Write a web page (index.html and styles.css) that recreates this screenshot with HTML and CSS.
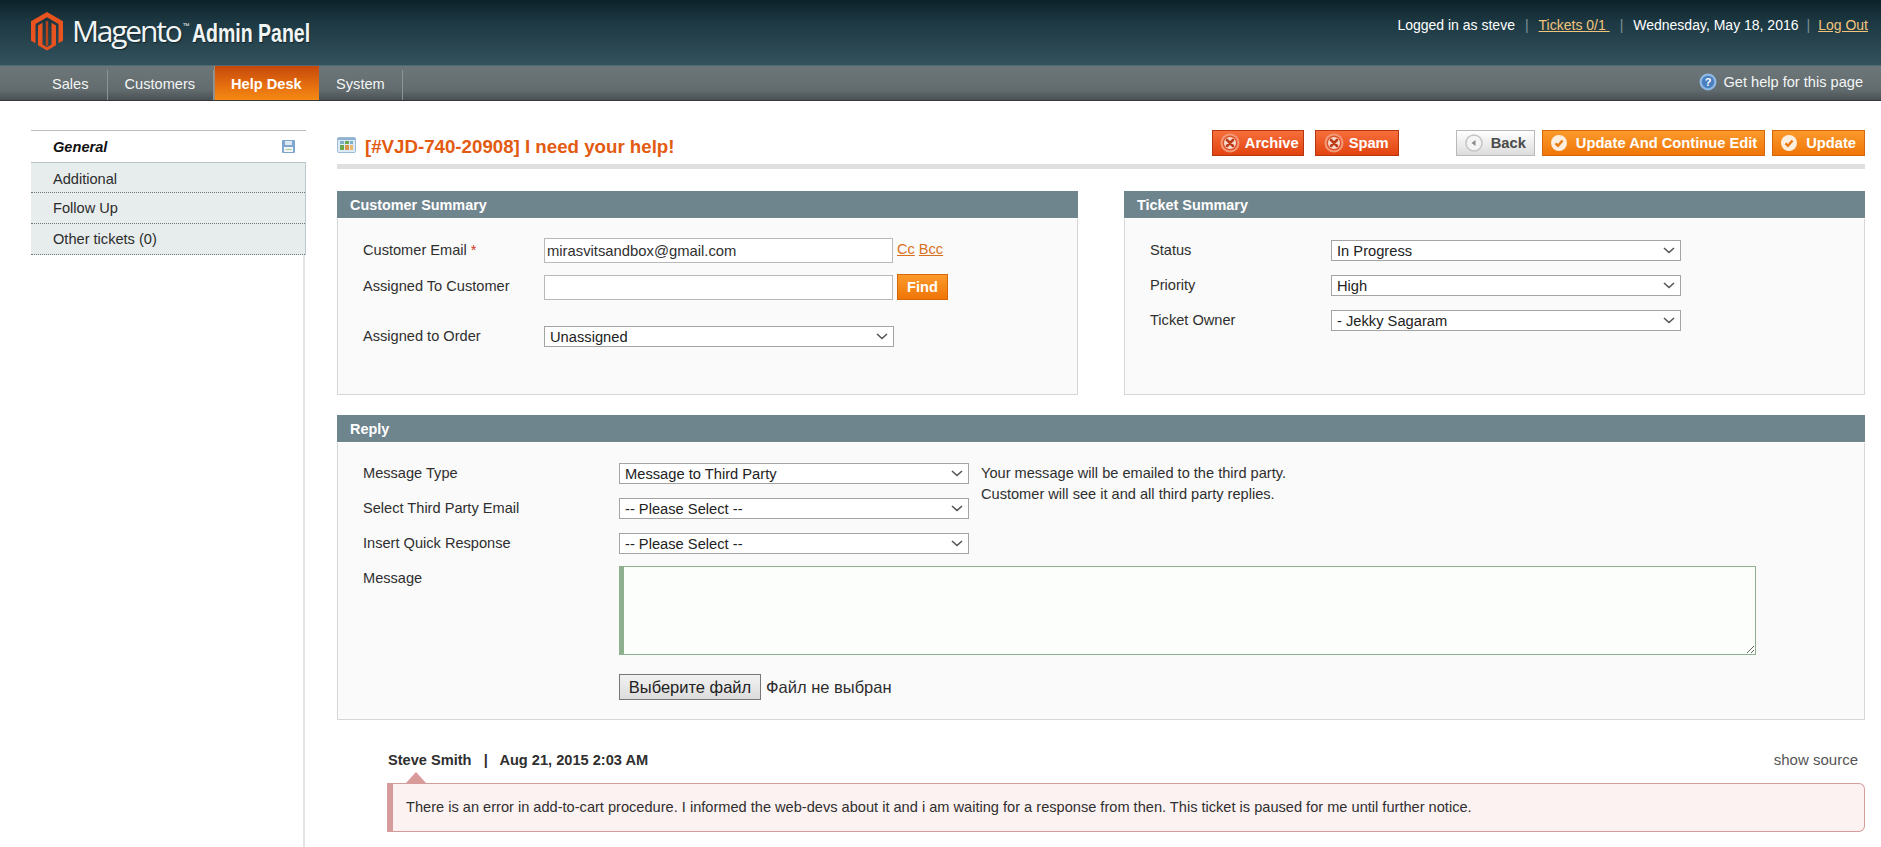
FILE: index.html
```html
<!DOCTYPE html>
<html lang="en">
<head>
<meta charset="utf-8">
<title>Magento Admin Panel</title>
<link rel="stylesheet" href="styles.css">
</head>
<body>
<svg class="defs" width="0" height="0">
  <symbol id="i-x" viewBox="0 0 20 20"><circle cx="10" cy="10" r="9.500" fill="#f29a78"/><circle cx="10" cy="10" r="7.500" fill="#e0532a"/><circle cx="10" cy="10" r="6" fill="#f7d9cd"/><path d="M7 7 13 13M13 7 7 13" stroke="#bb3b17" stroke-width="2.600" stroke-linecap="round"/></symbol>
  <symbol id="i-ok" viewBox="0 0 18 18"><circle cx="9" cy="9" r="8" fill="#fdeedd"/><path d="M5.500 9.300 8 11.800 12.500 6.500" fill="none" stroke="#e8790d" stroke-width="2.400"/></symbol>
  <symbol id="i-back" viewBox="0 0 18 18"><circle cx="9" cy="9" r="8" fill="#f4f4f4" stroke="#c4c4c4" stroke-width="1.500"/><path d="M10.500 6 6.500 9 10.500 12Z" fill="#8a8a8a"/></symbol>
</svg>
<header class="top">
  <div class="brand">
    <svg class="logo" width="32" height="39" viewBox="0 0 32 39"><path fill="#e8531f" d="M16 0 32 9.300V28.700L27.500 31.300V11.900L16 5.200 4.500 11.900V31.300L0 28.700V9.300Z"/><path fill="#e8531f" d="M7 13.400 11.500 10.800V32.600L16 35.200 20.500 32.600V10.800L25 13.400V33.200L16 38.600 7 33.200Z"/><path fill="#b8431a" d="M14.800 9.500 16 8.800 17.200 9.500V33.500L16 34.200 14.800 33.500Z"/></svg>
    <span class="wordmark">Magento</span><span class="tm">™</span>
    <span class="panelname">Admin Panel</span>
  </div>
  <div class="session">
    <span>Logged in as steve</span><span class="sep">|</span>
    <a href="#">Tickets 0/1&nbsp;</a><span class="sep">|</span>
    <span>Wednesday, May 18, 2016</span><span class="sep narrow">|</span>
    <a href="#">Log Out</a>
  </div>
</header>
<nav class="nav">
  <ul class="menu">
    <li class="item">Sales</li>
    <li class="item">Customers</li>
    <li class="item active">Help Desk</li>
    <li class="item">System</li>
  </ul>
  <div class="help">
    <svg width="18" height="18" viewBox="0 0 18 18"><circle cx="9" cy="9" r="8.500" fill="#8fb8e4"/><circle cx="9" cy="9" r="6.200" fill="#4a7fc0"/><text x="9" y="13" text-anchor="middle" class="helpq">?</text></svg>
    <span>Get help for this page</span>
  </div>
</nav>
<div class="page">
  <aside class="side">
    <div class="tab-current"><span>General</span>
      <svg width="13" height="13" viewBox="0 0 13 13"><rect width="13" height="13" rx="1" fill="#7fa6cf"/><rect x="3" y="1" width="7" height="4" fill="#dce8f4"/><rect x="2" y="7" width="9" height="5" fill="#f2f6fa"/><rect x="3.500" y="9" width="6" height="1" fill="#a8c88a"/></svg>
    </div>
    <ul class="tabs">
      <li>Additional</li>
      <li>Follow Up</li>
      <li>Other tickets (0)</li>
    </ul>
  </aside>
  <main class="main">
    <div class="titlebar">
      <svg width="19" height="16" viewBox="0 0 19 16"><rect x=".5" y=".5" width="18" height="15" rx="1" fill="#dcebf7" stroke="#9dbad6"/><rect x="1" y="1" width="17" height="2" fill="#8fb2d3"/><rect x="3" y="4" width="4" height="3" fill="#7fb0c8"/><rect x="8" y="4" width="4" height="3" fill="#6aa84f"/><rect x="13" y="4" width="3" height="3" fill="#7fb0c8"/><rect x="3" y="8" width="4" height="5" fill="#6aa84f"/><rect x="8" y="8" width="4" height="5" fill="#d9934a"/><rect x="13" y="8" width="3" height="5" fill="#e8b96c"/></svg>
      <h1 class="title">[#VJD-740-20908] I need your help!</h1>
      <div class="actions">
        <button class="btn red tight"><svg class="ico-x"><use href="#i-x"/></svg>Archive</button>
        <button class="btn red"><svg class="ico-x"><use href="#i-x"/></svg>Spam</button>
        <button class="btn grey gap-left"><svg class="ico-o"><use href="#i-back"/></svg>Back</button>
        <button class="btn orange"><svg class="ico-o"><use href="#i-ok"/></svg>Update And Continue Edit</button>
        <button class="btn orange last"><svg class="ico-o"><use href="#i-ok"/></svg>Update</button>
      </div>
    </div>
    <div class="columns">
      <section class="panel">
        <h2 class="panel-head">Customer Summary</h2>
        <div class="panel-body cust">
          <div class="row r-email"><label class="lbl lbl-c">Customer Email <em>*</em></label><input class="txt" value="mirasvitsandbox@gmail.com"><a class="cc" href="#">Cc</a><a class="cc" href="#">Bcc</a></div>
          <div class="row r-assign"><label class="lbl lbl-c">Assigned To Customer</label><input class="txt"><button class="find">Find</button></div>
          <div class="row r-order"><label class="lbl lbl-o">Assigned to Order</label><select class="sel sel-c"><option>Unassigned</option></select></div>
        </div>
      </section>
      <section class="panel">
        <h2 class="panel-head">Ticket Summary</h2>
        <div class="panel-body tick">
          <div class="row r-tick"><label class="lbl lbl-t">Status</label><select class="sel"><option>In Progress</option></select></div>
          <div class="row r-tick"><label class="lbl lbl-t">Priority</label><select class="sel"><option>High</option></select></div>
          <div class="row r-tick"><label class="lbl lbl-t">Ticket Owner</label><select class="sel"><option>- Jekky Sagaram</option></select></div>
        </div>
      </section>
    </div>
    <section class="panel reply">
      <h2 class="panel-head">Reply</h2>
      <div class="panel-body rep">
        <div class="row r-tick"><label class="lbl lbl-r">Message Type</label><select class="sel"><option>Message to Third Party</option></select>
          <p class="note">Your message will be emailed to the third party.<br>Customer will see it and all third party replies.</p></div>
        <div class="row r-tick"><label class="lbl lbl-r">Select Third Party Email</label><select class="sel"><option>-- Please Select --</option></select></div>
        <div class="row r-tick"><label class="lbl lbl-r">Insert Quick Response</label><select class="sel"><option>-- Please Select --</option></select></div>
        <div class="row r-msg"><label class="lbl lbl-r">Message</label><textarea class="msg"></textarea></div>
        <div class="row r-file"><span class="lbl lbl-r"></span><button class="filebtn">Выберите файл</button><span class="nofile">Файл не выбран</span></div>
      </div>
    </section>
    <article class="comment">
      <div class="meta"><strong>Steve Smith &nbsp;&nbsp;|&nbsp;&nbsp; Aug 21, 2015 2:03 AM</strong><a class="source" href="#">show source</a></div>
      <div class="bubble">There is an error in add-to-cart procedure. I informed the web-devs about it and i am waiting for a response from then. This ticket is paused for me until further notice.</div>
    </article>
  </main>
</div>
</body>
</html>
```
FILE: styles.css
```css
* { box-sizing: border-box; }
html, body { margin: 0; height: 847px; overflow: hidden; background: #fff; }
body { font: 14.600px/18px "Liberation Sans", Arial, sans-serif; color: #2f2f2f; }
ul { list-style: none; margin: 0; padding: 0; }
.defs { position: absolute; }

.top { height: 66px; display: flex; justify-content: space-between; background: linear-gradient(#0d2229, #1d3943 35%, #33525d); border-bottom: 1px solid #4f6a75; }
.brand { display: flex; align-items: flex-start; padding: 11px 0 0 31px; color: #f2f5f5; }
.logo { flex: none; margin-top: 1px; }
.wordmark { font: 30px/38px "Open Sans", sans-serif; letter-spacing: -2.200px; margin-left: 9px; margin-top: 1px; text-shadow: 1px 1px 1px #12262d; }
.tm { font-size: 7px; line-height: 30px; margin-left: 2px; }
.panelname { font: 700 25px/44px "Liberation Sans", sans-serif; margin-left: 2px; transform: scaleX(.78); transform-origin: left; white-space: nowrap; text-shadow: 1px 1px 1px #12262d; }
.session { display: flex; padding: 16px 13px 0 0; font-size: 14px; color: #fff; line-height: 18px; }
.session a { color: #f3c47c; }
.sep { color: #7f929a; margin: 0 10px; }
.sep.narrow { margin: 0 8px; }

.nav { height: 35px; display: flex; justify-content: space-between; background: linear-gradient(#6d7678, #626b6e 70%, #4a5154); border-bottom: 1px solid #33393c; color: #f4f6f6; }
.menu { display: flex; padding-left: 35px; }
.item { padding: 0 18px 0 17px; border-right: 1px solid #8b9496; margin-top: 4px; height: 30px; line-height: 28px; }
.item:last-child { padding-right: 17px; }
.item.active { margin: 0; height: 34px; line-height: 36px; font-weight: 700; background: linear-gradient(#c4480b, #e2690f 50%, #f58a13); border: 0; border-left: 1px solid #9a8d80; color: #fff; padding: 0 16px; width: 105px; white-space: nowrap; }
.help { display: flex; align-items: center; gap: 6px; padding-right: 18px; height: 32px; }
.helpq { font: 700 11px "Liberation Sans", sans-serif; fill: #fff; }

.page { display: flex; height: 746px; padding-top: 29px; }
.side { flex: none; margin: 0 31px; width: 275px; position: relative; }
.side::after { content: ""; position: absolute; right: 1px; top: 125px; bottom: 0; width: 2px; background: #e0e4e4; }
.tab-current { height: 33px; border-top: 1px solid #bcbcbc; border-bottom: 1px solid #b8c2c4; display: flex; align-items: center; justify-content: space-between; padding: 0 11px 0 22px; font-weight: 700; font-style: italic; color: #111; }
.tabs { background: #e7eded; border-right: 1px solid #b9c8cb; }
.tabs li { height: 31px; line-height: 31px; padding-left: 22px; border-bottom: 1px dotted #6d7a7d; color: #2c2c2c; }
.tabs li:first-child { height: 30px; line-height: 32px; }

.main { width: 1528px; flex: none; }
.titlebar { height: 39px; display: flex; align-items: flex-start; border-bottom: 5px solid #dfdfdf; margin-bottom: 22px; padding-top: 7px; }
.titlebar > svg { flex: none; margin-right: 9px; }
.title { margin: 0; font-size: 18.700px; line-height: 20px; color: #e35a11; font-weight: 700; flex: none; }
.actions { display: flex; margin-left: auto; gap: 7px; margin-top: -7px; }
.btn { height: 26px; border: 1px solid; font: 700 14.700px/22px "Liberation Sans", sans-serif; color: #fff; padding: 0 7px; display: flex; align-items: center; gap: 8px; white-space: nowrap; }
.btn.last { padding-right: 8px; }
.red { background: linear-gradient(#f66f3c, #e2430f); border-color: #b5360f; gap: 5px; padding: 0 9px 0 8px; }
.red.tight { padding: 0 4px 0 7px; margin-right: 4px; }
.orange { background: linear-gradient(#fb9a2c, #ef7607); border-color: #d46709; }
.grey { background: linear-gradient(#fff, #dcdcdc); border-color: #b9b9b9; color: #4a4a4a; padding: 0 8px; }
.gap-left { margin-left: 50px; }
.ico-x { width: 20px; height: 20px; }
.ico-o { width: 18px; height: 18px; }

.columns { display: flex; justify-content: space-between; }
.columns .panel { width: 741px; }
.panel-head { margin: 0; height: 28px; background: #6f858e; border-bottom: 1px solid #fff; color: #fff; font-size: 14.400px; line-height: 29px; font-weight: 700; padding-left: 13px; }
.panel-body { background: #fafafa; border: 1px solid #d6d6d6; border-top: 0; }
.cust, .tick { height: 176px; }
.cust { padding: 19px 25px 0; }
.tick { padding: 21px 25px 0; }
.rep { height: 277px; padding: 20px 25px 0; }
.reply { margin-top: 20px; }
.row { display: flex; align-items: flex-start; }
.r-email { height: 37px; }
.r-assign { height: 51px; }
.r-tick { height: 35px; }
.r-msg { height: 106px; }
.lbl { flex: none; line-height: 18px; padding-top: 2px; }
.lbl em { color: #d2391c; font-style: normal; }
.lbl-c { width: 181px; }
.r-email .lbl-c { padding-top: 3px; }
.lbl-t { width: 181px; padding-top: 1px; }
.lbl-o { width: 181px; padding-top: 1px; }
.lbl-r { width: 256px; padding-top: 1px; }
.txt { width: 349px; height: 25px; border: 1px solid #b9b9b9; background: #fff; font: 14.800px "Liberation Sans", sans-serif; color: #2f2f2f; padding: 0 2px; }
.cc { color: #d9701f; margin-left: 4px; padding-top: 2px; }
.find { margin: -1px 0 0 4px; width: 51px; height: 26px; background: linear-gradient(#fb9a2c, #ef7607); border: 1px solid #d46709; color: #fff; font: 700 14.600px "Liberation Sans", sans-serif; padding: 0; }
.sel { appearance: none; width: 350px; height: 21px; border: 1px solid #a4a4a4; font: 14.700px "Liberation Sans", sans-serif; color: #222; padding: 0 20px 0 5px; background: #fff url("data:image/svg+xml,%3Csvg xmlns='http://www.w3.org/2000/svg' width='12' height='7'%3E%3Cpath d='M1 1 6 5.500 11 1' fill='none' stroke='%23555' stroke-width='1.600'/%3E%3C/svg%3E") no-repeat right 5px center; }
.note { margin: 0 0 0 12px; line-height: 21px; }
.msg { width: 1137px; height: 89px; margin-top: -2px; background: #fbfefb; border: 1px solid #8fb08f; border-left-width: 5px; }
.filebtn { width: 142px; height: 26px; background: linear-gradient(#f2f2f2, #dcdcdc); border: 1px solid #777; font: 16.500px "Liberation Sans", sans-serif; color: #222; padding: 0; white-space: nowrap; }
.nofile { margin-left: 5px; font-size: 16.500px; line-height: 26px; }

.comment { margin: 31px 0 0 50px; }
.meta { display: flex; justify-content: space-between; line-height: 18px; padding: 0 7px 0 1px; height: 32px; position: relative; }
.meta::after { content: ""; position: absolute; left: 19px; bottom: 0; border: 10px solid transparent; border-top: 0; border-bottom: 11px solid #d99a9a; }
.source { color: #555; text-decoration: none; font-size: 15px; }
.bubble { height: 49px; background: #fdf2f2; border: 1px solid #d69c9c; border-left-width: 6px; border-radius: 0 6px 6px 0; padding: 14px 13px; line-height: 18px; }
```
